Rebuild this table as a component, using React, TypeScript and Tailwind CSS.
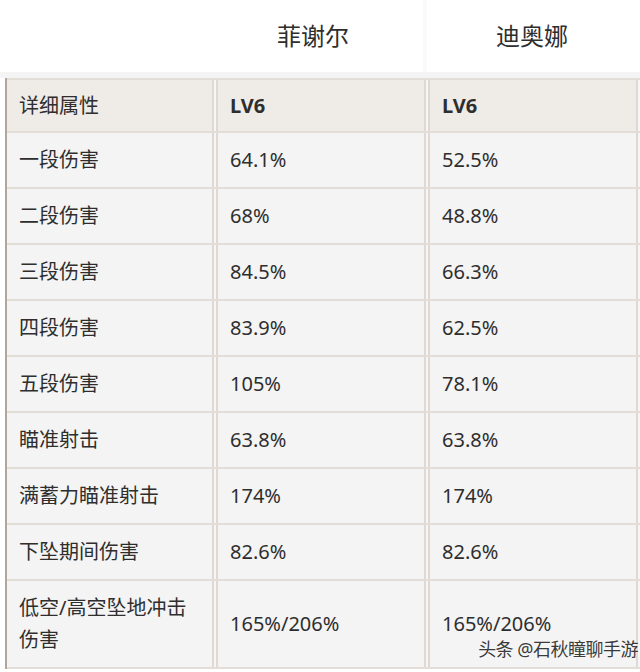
import React from "react";

const rows: [string, string, string][] = [
  ["一段伤害", "64.1%", "52.5%"],
  ["二段伤害", "68%", "48.8%"],
  ["三段伤害", "84.5%", "66.3%"],
  ["四段伤害", "83.9%", "62.5%"],
  ["五段伤害", "105%", "78.1%"],
  ["瞄准射击", "63.8%", "63.8%"],
  ["满蓄力瞄准射击", "174%", "174%"],
  ["下坠期间伤害", "82.6%", "82.6%"],
];

function Row({
  a,
  b,
  c,
  h,
  header,
}: {
  a: React.ReactNode;
  b: React.ReactNode;
  c: React.ReactNode;
  h: string;
  header?: boolean;
}) {
  const bg = header ? "bg-[#efebe7]" : "bg-[#f4f4f4]";
  const weight = header ? "font-bold" : "font-normal";
  return (
    <div className={`flex ${h} border-b-2 border-[#e3ddd7]`}>
      <div className={`w-[207px] ${bg} border-r-2 border-[#e0d9d3] flex items-center pl-[12px]`}>
        {a}
      </div>
      <div className="w-[2px] bg-[#f7f6f5]" />
      <div className={`w-[210px] ${bg} border-l-2 border-r-2 border-[#e0d9d3] flex items-center pl-[12px] ${weight}`}>
        {b}
      </div>
      <div className="w-[2px] bg-[#f7f6f5]" />
      <div className={`w-[210px] ${bg} border-l-2 border-r-2 border-[#e0d9d3] flex items-center pl-[12px] ${weight}`}>
        {c}
      </div>
      <div className="flex-1 bg-[#f6f6f6]" />
    </div>
  );
}

export default function App() {
  return (
    <div
      className="w-[640px] h-[672px] overflow-hidden bg-white text-[#2e2e2e] relative"
      style={{ fontFamily: '"Noto Sans", "Noto Sans CJK SC", sans-serif' }}
    >
      <div className="flex h-[72px] items-center">
        <div className="w-[213px]" />
        <div className="w-[210px] flex justify-center text-[24px] pr-[10px]">菲谢尔</div>
        <div className="w-[4px] h-full bg-[#fafafa]" />
        <div className="w-[210px] flex justify-center text-[24px]">迪奥娜</div>
      </div>
      <div className="h-[6px] bg-[#f4f4f4]" />
      <div className="ml-[5px] border-l-2 border-[#b3a59c] text-[20px]">
        <div className="border-t-2 border-[#e3ddd7]">
          <Row header a="详细属性" b="LV6" c="LV6" h="h-[53px]" />
          {rows.map((r) => (
            <Row key={r[0]} a={r[0]} b={r[1]} c={r[2]} h="h-[56px]" />
          ))}
          <Row
            a={
              <div className="leading-[32px]">
                低空/高空坠地冲击
                <br />
                伤害
              </div>
            }
            b="165%/206%"
            c="165%/206%"
            h="h-[88px]"
          />
        </div>
      </div>
      <div
        className="absolute right-[2px] top-[636px] text-[18px] text-[#3a3a3a] tracking-[-0.5px]"
        style={{ textShadow: "0 0 2px #fff" }}
      >
        头条 @石秋瞳聊手游
      </div>
    </div>
  );
}
